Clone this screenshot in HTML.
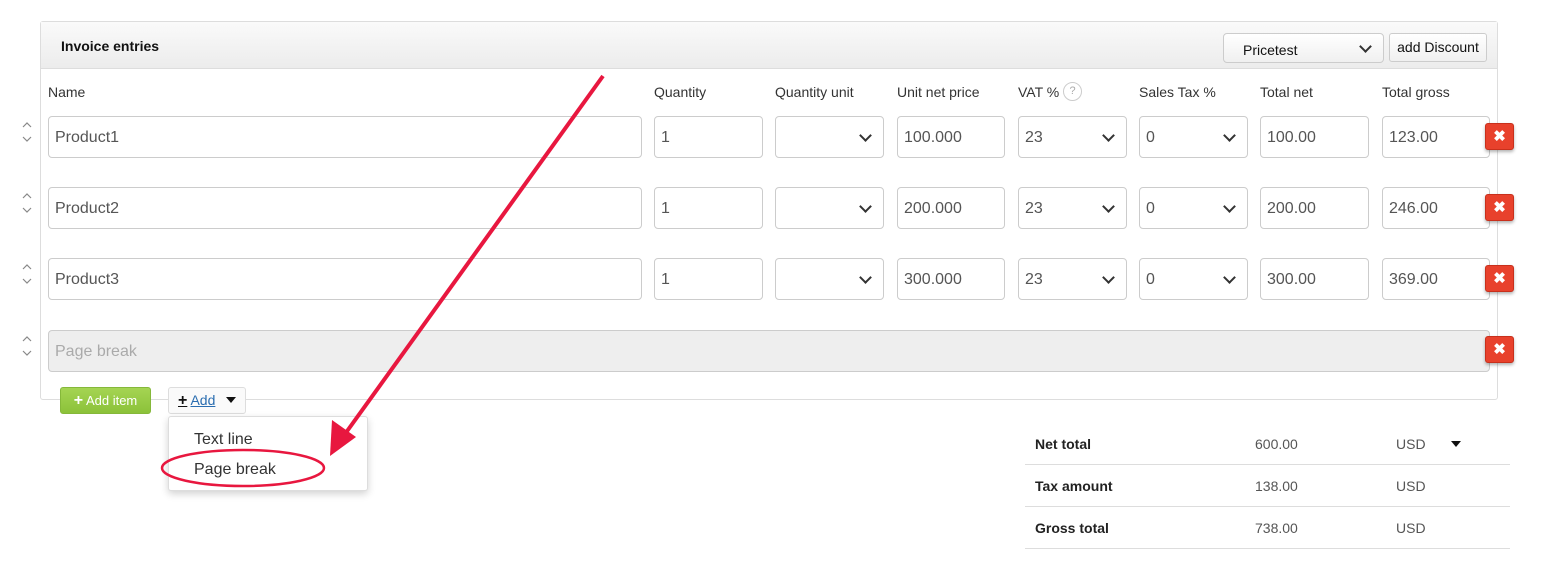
<!DOCTYPE html>
<html><head><style>
*{box-sizing:border-box}
body{margin:0;width:1565px;height:565px;background:#fff;font-family:"Liberation Sans",Arial,sans-serif;position:relative;overflow:hidden;color:#333}
.a{position:absolute}
.panel{left:40px;top:21px;width:1458px;height:379px;border:1px solid #ddd;border-radius:3px}
.hdr{left:41px;top:22px;width:1456px;height:47px;background:linear-gradient(#fafafa,#ececec);border-bottom:1px solid #ddd}
.lbl{font-size:14px;color:#333;top:84px}
.in{height:42px;border:1px solid #ccc;border-radius:4px;background:#fff;font-size:16px;color:#555;padding:0 6px;line-height:42px}
.sel::after{content:"";position:absolute;right:13px;top:50%;margin-top:-6px;width:7px;height:7px;border-right:2px solid #333;border-bottom:2px solid #333;transform:rotate(45deg)}
.del{width:29px;height:27px;background:#e8412c;border:1px solid #c8301c;border-radius:3px;box-shadow:0 2px 3px rgba(0,0,0,.3);color:#fff;font-weight:bold;font-size:15px;text-align:center;line-height:25px}
.tr{left:1025px;width:485px;height:42px;border-bottom:1px solid #ddd;font-size:14px}
</style></head><body>
<div class="a panel"></div>
<div class="a hdr"></div>
<div class="a" style="left:61px;top:38px;font-size:14px;font-weight:bold;color:#111">Invoice entries</div>
<div class="a in sel" style="left:1223px;top:33px;width:161px;height:30px;line-height:32px;padding:0 19px;font-size:14px;color:#111;background:linear-gradient(#fff,#f0f0f0)">Pricetest</div>
<div class="a" style="left:1389px;top:33px;width:98px;height:29px;border:1px solid #ccc;border-radius:3px;background:linear-gradient(#fff,#f0f0f0);font-size:14px;color:#111;text-align:center;line-height:26px">add Discount</div>
<div class="a lbl" style="left:48px">Name</div>
<div class="a lbl" style="left:654px">Quantity</div>
<div class="a lbl" style="left:775px">Quantity unit</div>
<div class="a lbl" style="left:897px">Unit net price</div>
<div class="a lbl" style="left:1018px">VAT %</div>
<div class="a" style="left:1063px;top:82px;width:19px;height:19px;border:1px solid #ccc;border-radius:50%;font-size:11px;color:#aaa;text-align:center;line-height:17px">?</div>
<div class="a lbl" style="left:1139px">Sales Tax %</div>
<div class="a lbl" style="left:1260px">Total net</div>
<div class="a lbl" style="left:1382px">Total gross</div>

<svg class="a" style="left:0;top:0" width="40" height="400" fill="none" stroke="#888" stroke-width="1.2">
<path d="M23 127l4-4 4 4M23 137l4 4 4-4"/>
<path d="M23 198l4-4 4 4M23 208l4 4 4-4"/>
<path d="M23 269l4-4 4 4M23 279l4 4 4-4"/>
<path d="M23 341l4-4 4 4M23 351l4 4 4-4"/>
</svg>

<div class="a in" style="left:48px;top:116px;width:594px">Product1</div>
<div class="a in" style="left:654px;top:116px;width:109px">1</div>
<div class="a in sel" style="left:775px;top:116px;width:109px"></div>
<div class="a in" style="left:897px;top:116px;width:108px">100.000</div>
<div class="a in sel" style="left:1018px;top:116px;width:109px">23</div>
<div class="a in sel" style="left:1139px;top:116px;width:109px">0</div>
<div class="a in" style="left:1260px;top:116px;width:109px">100.00</div>
<div class="a in" style="left:1382px;top:116px;width:108px">123.00</div>
<div class="a del" style="left:1485px;top:123px">&#x2716;</div>

<div class="a in" style="left:48px;top:187px;width:594px">Product2</div>
<div class="a in" style="left:654px;top:187px;width:109px">1</div>
<div class="a in sel" style="left:775px;top:187px;width:109px"></div>
<div class="a in" style="left:897px;top:187px;width:108px">200.000</div>
<div class="a in sel" style="left:1018px;top:187px;width:109px">23</div>
<div class="a in sel" style="left:1139px;top:187px;width:109px">0</div>
<div class="a in" style="left:1260px;top:187px;width:109px">200.00</div>
<div class="a in" style="left:1382px;top:187px;width:108px">246.00</div>
<div class="a del" style="left:1485px;top:194px">&#x2716;</div>

<div class="a in" style="left:48px;top:258px;width:594px">Product3</div>
<div class="a in" style="left:654px;top:258px;width:109px">1</div>
<div class="a in sel" style="left:775px;top:258px;width:109px"></div>
<div class="a in" style="left:897px;top:258px;width:108px">300.000</div>
<div class="a in sel" style="left:1018px;top:258px;width:109px">23</div>
<div class="a in sel" style="left:1139px;top:258px;width:109px">0</div>
<div class="a in" style="left:1260px;top:258px;width:109px">300.00</div>
<div class="a in" style="left:1382px;top:258px;width:108px">369.00</div>
<div class="a del" style="left:1485px;top:265px">&#x2716;</div>

<div class="a in" style="left:48px;top:330px;width:1442px;background:#eee;color:#aaa">Page break</div>
<div class="a del" style="left:1485px;top:336px">&#x2716;</div>

<div class="a" style="left:60px;top:387px;width:91px;height:27px;background:linear-gradient(#a5d453,#8cc23a);border:1px solid #85b83a;border-radius:3px;color:#fff;font-size:13px;line-height:25px;text-align:center"><b style="font-size:16px">+</b> Add item</div>
<div class="a" style="left:168px;top:387px;width:78px;height:27px;border:1px solid #ddd;border-radius:3px;background:#fafafa;font-size:14px;line-height:24px;padding-left:9px"><b style="color:#111;text-decoration:underline;font-size:16px">+</b> <span style="color:#2a6db0;text-decoration:underline">Add</span></div>
<svg class="a" style="left:225px;top:396px" width="12" height="8"><path d="M1 1h10l-5 6z" fill="#111"/></svg>
<div class="a" style="left:168px;top:416px;width:200px;height:75px;border:1px solid #ddd;border-radius:3px;background:#fff;box-shadow:0 3px 8px rgba(0,0,0,.18)">
<div class="a" style="left:25px;top:14px;font-size:16px;color:#333">Text line</div>
<div class="a" style="left:25px;top:44px;font-size:16px;color:#333">Page break</div>
</div>

<div class="a tr" style="top:423px"><b class="a" style="left:10px;top:13px;color:#222">Net total</b><span class="a" style="left:230px;top:13px;color:#555">600.00</span><span class="a" style="left:371px;top:13px;color:#555">USD</span></div>
<svg class="a" style="left:1450px;top:440px" width="12" height="8"><path d="M1 1h10l-5 6z" fill="#111"/></svg>
<div class="a tr" style="top:465px"><b class="a" style="left:10px;top:13px;color:#222">Tax amount</b><span class="a" style="left:230px;top:13px;color:#555">138.00</span><span class="a" style="left:371px;top:13px;color:#555">USD</span></div>
<div class="a tr" style="top:507px"><b class="a" style="left:10px;top:13px;color:#222">Gross total</b><span class="a" style="left:230px;top:13px;color:#555">738.00</span><span class="a" style="left:371px;top:13px;color:#555">USD</span></div>

<svg class="a" style="left:0;top:0" width="1565" height="565">
<line x1="603" y1="76" x2="345" y2="434" stroke="#e8173f" stroke-width="4"/>
<polygon points="330,456 332,420 356,437" fill="#e8173f"/>
<ellipse cx="243" cy="468" rx="81" ry="18" fill="none" stroke="#e8173f" stroke-width="2.5"/>
</svg>
</body></html>
